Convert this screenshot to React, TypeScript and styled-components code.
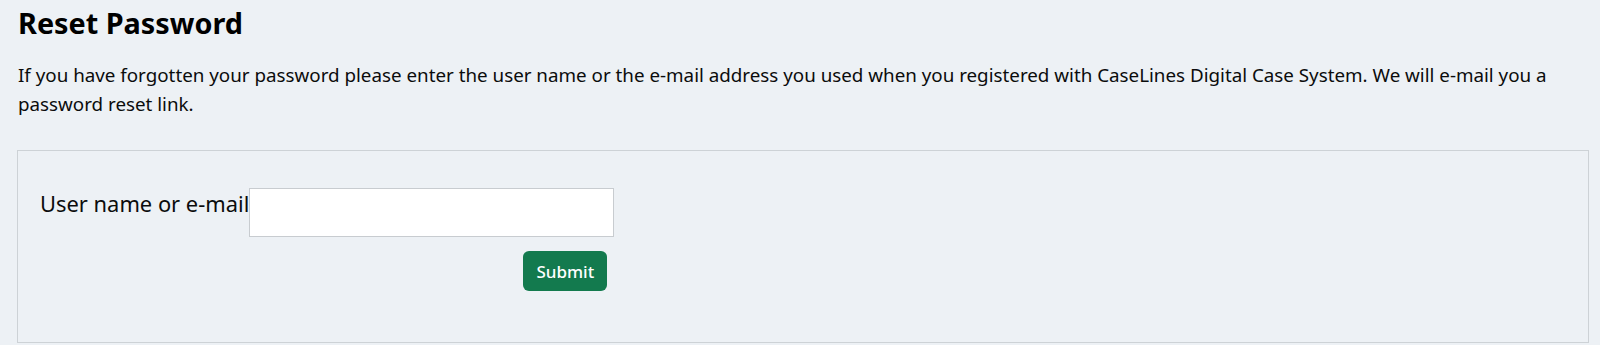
import React from 'react'
import styled, { createGlobalStyle } from 'styled-components'

const bodyFont = '"Noto Sans", Lato, "Liberation Sans", sans-serif'

const GlobalStyle = createGlobalStyle`
  html, body {
    margin: 0;
    padding: 0;
    background: #edf1f5;
  }
  body {
    font-family: ${bodyFont};
    color: #0b0c0c;
  }
`

const Page = styled.main`
  padding: 2px 11px 0 18px;
  box-sizing: border-box;
  width: 1600px;
`

const Title = styled.h1`
  margin: 0 0 17px;
  font-size: 28.8px;
  line-height: 42px;
  font-weight: 700;
  color: #000;
`

const Intro = styled.p`
  margin: 0 0 31px;
  font-size: 18.8px;
  line-height: 29px;
  color: #0b0c0c;
`

const Panel = styled.section`
  border: 1px solid #cdd2d6;
  margin-left: -1px;
  padding: 37px 22px 50px;
  box-sizing: border-box;
  min-height: 193px;
`

const FormGrid = styled.form`
  display: grid;
  grid-template-columns: auto 365px;
  row-gap: 14px;
  justify-content: start;
`

const Label = styled.label`
  font-size: 21.9px;
  line-height: 26px;
  padding-top: 3px;
  color: #0b0c0c;
`

const TextInput = styled.input`
  width: 365px;
  height: 49px;
  box-sizing: border-box;
  border: 1px solid #c8ccd0;
  background: #fff;
  font-family: ${bodyFont};
  font-size: 18px;
  padding: 0 8px;
  outline: none;
`

const Actions = styled.div`
  grid-column: 2;
  display: flex;
  justify-content: flex-end;
  padding-right: 7px;
`

const SubmitButton = styled.button<{ $tone?: string }>`
  width: 84px;
  height: 40px;
  border: none;
  border-radius: 6px;
  background: ${p => p.$tone ?? '#137a4e'};
  color: #fff;
  font-family: ${bodyFont};
  font-size: 17px;
  font-weight: 500;
  cursor: pointer;
`

export default function App() {
  return (
    <>
      <GlobalStyle />
      <Page>
        <Title>Reset Password</Title>
        <Intro>
          If you have forgotten your password please enter the user name or the e-mail address you used when you
          registered with CaseLines Digital Case System. We will e-mail you a password reset link.
        </Intro>
        <Panel>
          <FormGrid onSubmit={e => e.preventDefault()}>
            <Label htmlFor="username">User name or e-mail</Label>
            <TextInput id="username" type="text" />
            <Actions>
              <SubmitButton type="submit">Submit</SubmitButton>
            </Actions>
          </FormGrid>
        </Panel>
      </Page>
    </>
  )
}
